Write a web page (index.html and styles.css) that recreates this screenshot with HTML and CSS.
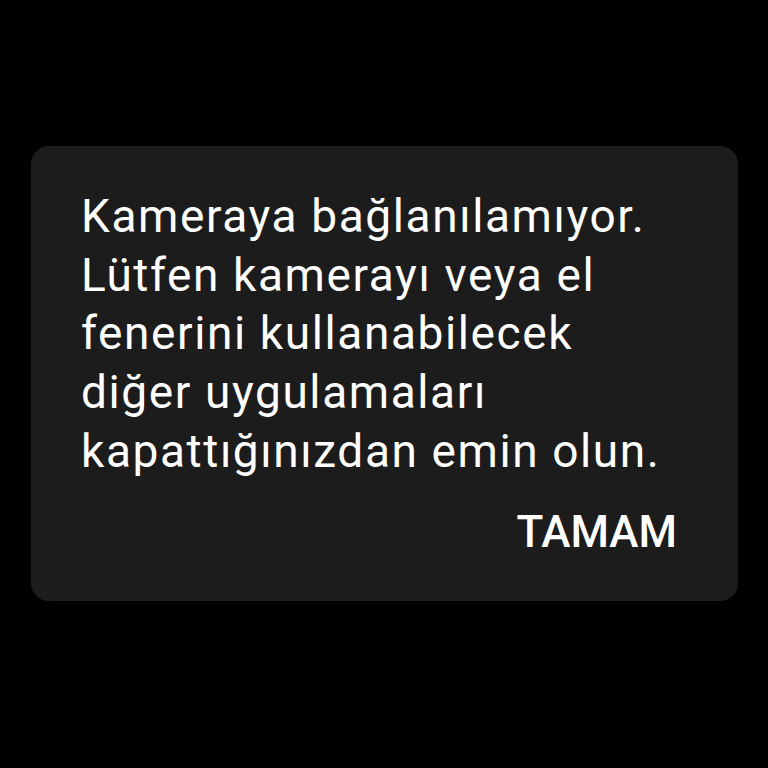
FILE: index.html
```html
<!DOCTYPE html>
<html lang="tr">
<head>
<meta charset="utf-8">
<link rel="stylesheet" href="styles.css">
</head>
<body>
<div class="dialog">
  <p class="message">Kameraya bağlanılamıyor.<br>Lütfen kamerayı veya el<br>fenerini kullanabilecek<br>diğer uygulamaları<br>kapattığınızdan emin olun.</p>
  <div class="actions"><span class="button">TAMAM</span></div>
</div>
</body>
</html>
```
FILE: styles.css
```css
html, body {
  margin: 0;
  padding: 0;
  background: #000;
  width: 768px;
  height: 768px;
  overflow: hidden;
}
body {
  display: flex;
  flex-direction: column;
  padding: 146px 30px 0 31px;
  box-sizing: border-box;
  font-family: Roboto, "Noto Sans", sans-serif;
}
.dialog {
  background: #1c1c1c;
  border-radius: 18px;
  height: 455px;
  box-sizing: border-box;
  padding: 40.9px 61px 0 50px;
  color: #fff;
}
.message {
  margin: 0;
  font-size: 46px;
  line-height: 58.75px;
  letter-spacing: 1.6px;
  white-space: nowrap;
}
.actions {
  display: flex;
  justify-content: flex-end;
  margin-top: 26.6px;
}
.button {
  font-size: 44px;
  font-weight: 500;
  line-height: 50px;
}
```
